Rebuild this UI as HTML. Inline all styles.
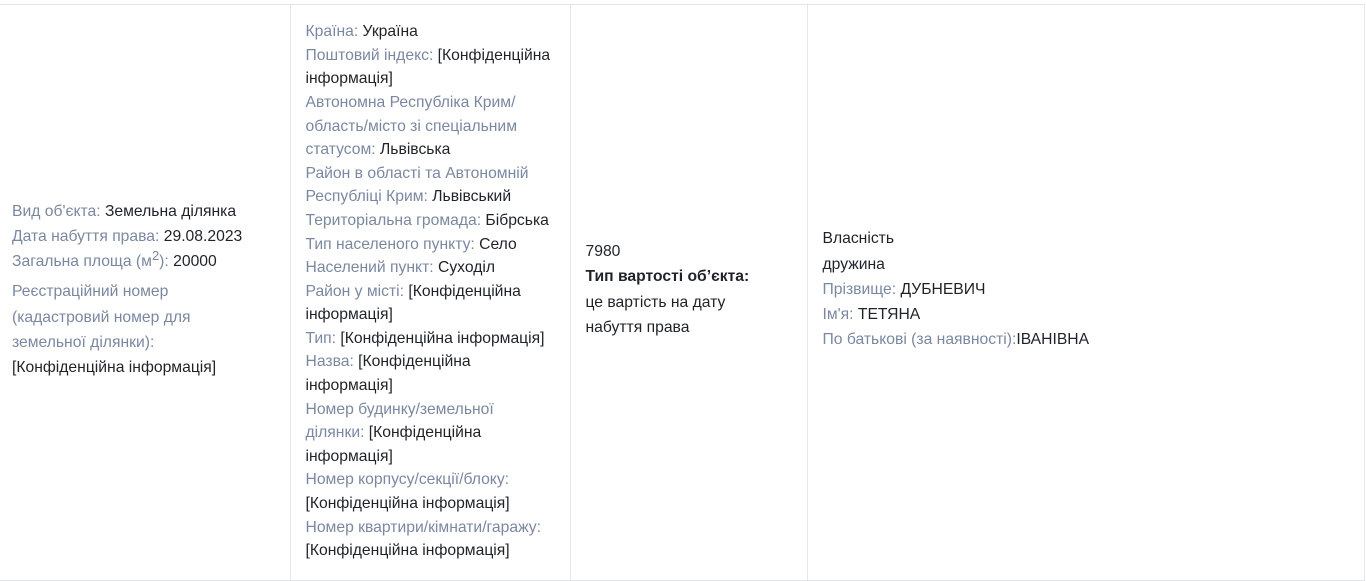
<!DOCTYPE html>
<html><head><meta charset="utf-8"><style>
html,body{margin:0;padding:0;background:#fff;width:1366px;height:572px;overflow:hidden}
table{position:absolute;top:4px;left:0;border-collapse:collapse;table-layout:fixed;width:1365px;font-family:"Liberation Sans",Arial,sans-serif;font-size:15.7px;line-height:25.2px;color:#1f2329}
td{border:1px solid #e3e6ea;border-left:none;vertical-align:middle;height:576px;padding:16px 15px 22px;box-sizing:border-box}
td:first-child{padding-left:12px;padding-right:22px}
td.c2{padding-right:17px;line-height:23.6px;padding-top:14px;padding-bottom:16px}
td.c3{padding-right:30px}
.l{color:#7b88a2}
b{font-weight:bold}
sup{font-size:13px;line-height:0}
</style></head><body>
<table><tr>
<td style="width:290px"><span class="l">Вид об'єкта:</span> Земельна ділянка<br><span class="l">Дата набуття права:</span> 29.08.2023<br><span class="l">Загальна площа (м<sup>2</sup>):</span> 20000<div style="margin-top:5px"><span class="l">Реєстраційний номер (кадастровий номер для земельної ділянки):</span><br>[Конфіденційна інформація]</div></td>
<td class="c2" style="width:280px"><span class="l">Країна:</span> Україна<br><span class="l">Поштовий індекс:</span> [Конфіденційна інформація]<br><span class="l">Автономна Республіка Крим/ область/місто зі спеціальним статусом:</span> Львівська<br><span class="l">Район в області та Автономній Республіці Крим:</span> Львівський<br><span class="l">Територіальна громада:</span> Бібрська<br><span class="l">Тип населеного пункту:</span> Село<br><span class="l">Населений пункт:</span> Суходіл<br><span class="l">Район у місті:</span> [Конфіденційна інформація]<br><span class="l">Тип:</span> [Конфіденційна інформація]<br><span class="l">Назва:</span> [Конфіденційна інформація]<br><span class="l">Номер будинку/земельної ділянки:</span> [Конфіденційна інформація]<br><span class="l">Номер корпусу/секції/блоку:</span><br>[Конфіденційна інформація]<br><span class="l">Номер квартири/кімнати/гаражу:</span><br>[Конфіденційна інформація]</td>
<td class="c3" style="width:237px">7980<br><b>Тип вартості об’єкта:</b><br>це вартість на дату набуття права</td>
<td>Власність<br>дружина<br><span class="l">Прізвище:</span> ДУБНЕВИЧ<br><span class="l">Ім'я:</span> ТЕТЯНА<br><span class="l">По батькові (за наявності):</span>ІВАНІВНА</td>
</tr></table>
</body></html>
